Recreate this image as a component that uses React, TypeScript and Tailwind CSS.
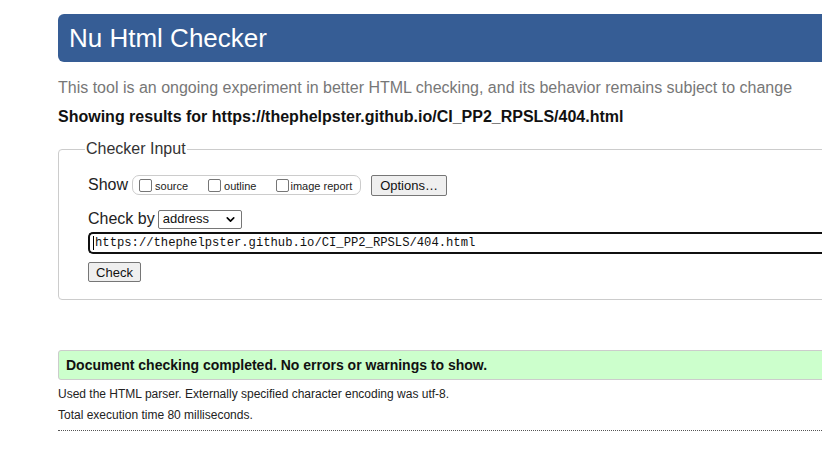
import { ChevronDown } from 'lucide-react';

const URL = 'https://thephelpster.github.io/CI_PP2_RPSLS/404.html';

export default function App() {
  return (
    <div className="w-[822px] h-[451px] overflow-hidden bg-white font-['Liberation_Sans',Arial,sans-serif] text-[#222]">
      <div className="w-[1000px] pl-[58px] pt-[14px]">
        {/* Header */}
        <div className="h-[48px] rounded-[6px] bg-[#365d95] pl-[11px] flex items-center">
          <h1 className="text-[26px] text-white leading-none">Nu Html Checker</h1>
        </div>

        <p className="mt-[16px] text-[16px] leading-[20px] text-[#777]">
          This tool is an ongoing experiment in better HTML checking, and its behavior remains subject to change
        </p>
        <p className="mt-[9px] text-[16px] leading-[20px] font-bold text-[#111]">
          Showing results for {URL}
        </p>

        {/* Checker input */}
        <fieldset className="mt-[12px] h-[161px] rounded-[4px] border border-[#ccc] px-[29px]">
          <legend className="ml-[-3px] px-[1px] text-[16px] leading-[20px] text-[#333]">Checker Input</legend>

          <div className="mt-[14px] flex items-center">
            <span className="text-[16px] text-[#222]">Show</span>
            <div className="ml-[4px] flex h-[20px] w-[229px] items-center rounded-[7px] border border-[#ccc] pl-[6px]">
              <label className="flex items-center text-[11px] text-[#222]">
                <span className="h-[13px] w-[13px] rounded-[2px] border border-[#767676] bg-white" />
                <span className="ml-[3px] mt-[3px]">source</span>
              </label>
              <label className="ml-[20px] flex items-center text-[11px] text-[#222]">
                <span className="h-[13px] w-[13px] rounded-[2px] border border-[#767676] bg-white" />
                <span className="ml-[3px] mt-[3px]">outline</span>
              </label>
              <label className="ml-[20px] flex items-center text-[11px] text-[#222]">
                <span className="h-[13px] w-[13px] rounded-[2px] border border-[#767676] bg-white" />
                <span className="ml-[1px] mt-[3px]">image report</span>
              </label>
            </div>
            <button className="ml-[10px] h-[21px] w-[76px] rounded-[2px] border border-[#767676] bg-[#efefef] text-[13px] text-[#111]">
              Options…
            </button>
          </div>

          <div className="mt-[10px] flex items-center">
            <span className="text-[16px] text-[#222]">Check by</span>
            <div className="ml-[3px] flex h-[19px] w-[84px] items-center justify-between rounded-[2px] border border-[#767676] bg-white pl-[4px] pr-[4px]">
              <span className="text-[13px] text-[#111]">address</span>
              <ChevronDown className="h-[13px] w-[13px] text-black" strokeWidth={3} />
            </div>
          </div>

          <div className="mt-[1px] flex h-[22px] items-center rounded-l-[5px] border-2 border-r-0 border-[#101010] bg-white pl-[3px]">
            <span className="h-[14px] w-px bg-black" />
            <span className="ml-[1px] font-['Liberation_Mono',monospace] text-[12.2px] text-[#111]">{URL}</span>
          </div>

          <button className="mt-[8px] h-[20px] w-[53px] rounded-[2px] border border-[#767676] bg-[#efefef] text-[13px] text-[#111]">
            Check
          </button>
        </fieldset>

        {/* Result */}
        <div className="mt-[50px] flex h-[30px] items-center rounded-[3px] border border-[#ccc] bg-[#ccffcc] pl-[7px]">
          <span className="text-[14px] font-bold text-[#111]">Document checking completed. No errors or warnings to show.</span>
        </div>
        <p className="mt-[7px] text-[12px] leading-[15px] text-[#222]">
          Used the HTML parser. Externally specified character encoding was utf-8.
        </p>
        <p className="mt-[6px] text-[12px] leading-[15px] text-[#222]">Total execution time 80 milliseconds.</p>
        <div className="mt-[7px] border-t border-dotted border-[#555]" />
      </div>
    </div>
  );
}
